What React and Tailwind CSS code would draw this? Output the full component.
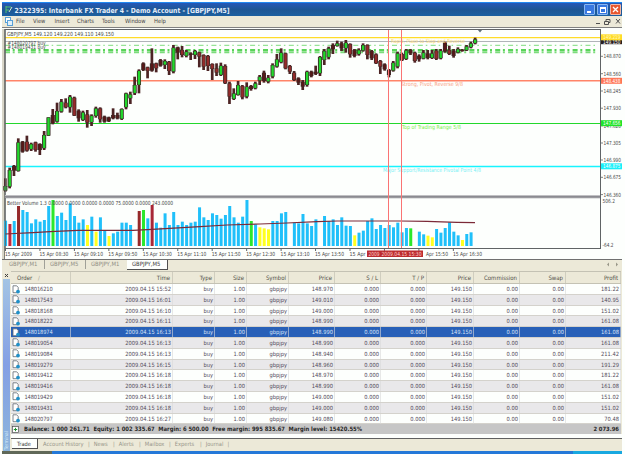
import React from 'react';

// [high, bodyTop, bodyBottom, low, colour] in thirds of a pixel, one entry per 5 minute bar
const CANDLES = [
	[535, 558, 572, 575, 'g'], [503, 510, 560, 565, 'g'], [495, 498, 512, 528, 'd'], [415, 427, 513, 515, 'g'],
	[423, 425, 455, 458, 'd'], [407, 425, 452, 455, 'r'], [428, 432, 448, 453, 'g'], [425, 427, 450, 455, 'r'],
	[430, 432, 450, 465, 'd'], [393, 405, 445, 450, 'g'], [352, 352, 407, 408, 'g'], [327, 345, 370, 373, 'd'],
	[308, 333, 365, 368, 'g'], [297, 305, 335, 338, 'g'], [295, 308, 322, 325, 'r'], [285, 290, 322, 338, 'g'],
	[290, 293, 347, 348, 'r'], [328, 332, 355, 365, 'd'], [332, 337, 360, 363, 'g'], [330, 343, 368, 383, 'r'],
	[343, 347, 367, 378, 'g'], [320, 325, 348, 353, 'g'], [322, 325, 358, 368, 'r'], [347, 350, 365, 368, 'd'],
	[350, 352, 364, 366, 'd'], [325, 345, 355, 358, 'd'], [338, 345, 355, 358, 'd'], [325, 327, 357, 360, 'g'],
	[278, 280, 322, 328, 'g'], [275, 283, 295, 312, 'g'], [230, 255, 280, 285, 'g'], [208, 212, 255, 280, 'g'],
	[187, 190, 210, 213, 'd'], [200, 202, 213, 235, 'r'], [145, 190, 212, 215, 'd'], [188, 190, 205, 217, 'r'],
	[177, 180, 197, 200, 'd'], [178, 183, 195, 207, 'g'], [183, 185, 213, 225, 'r'], [135, 143, 215, 220, 'g'],
	[140, 142, 158, 178, 'd'], [138, 150, 165, 172, 'r'], [150, 155, 168, 172, 'g'], [157, 160, 165, 180, 'd'],
	[150, 153, 165, 177, 'g'], [155, 157, 170, 202, 'r'], [163, 165, 200, 210, 'r'], [165, 168, 198, 213, 'r'],
	[190, 192, 207, 240, 'r'], [190, 205, 218, 228, 'r'], [188, 197, 225, 228, 'g'], [193, 198, 250, 252, 'r'],
	[245, 250, 290, 312, 'r'], [265, 280, 297, 300, 'g'], [243, 255, 285, 287, 'g'], [255, 258, 292, 298, 'r'],
	[247, 260, 290, 295, 'g'], [255, 258, 267, 272, 'd'], [245, 250, 265, 268, 'g'], [225, 230, 242, 255, 'g'],
	[212, 218, 243, 248, 'd'], [225, 233, 245, 250, 'g'], [190, 195, 230, 235, 'g'], [162, 178, 200, 203, 'g'],
	[145, 158, 187, 190, 'g'], [158, 160, 205, 208, 'r'], [195, 198, 215, 222, 'r'], [213, 218, 240, 243, 'r'],
	[232, 235, 248, 255, 'd'], [240, 245, 260, 270, 'd'], [212, 215, 255, 260, 'g'], [212, 215, 228, 232, 'd'],
	[197, 215, 222, 225, 'd'], [168, 171, 220, 228, 'g'], [147, 153, 180, 195, 'g'], [140, 145, 172, 178, 'g'],
	[130, 135, 148, 162, 'd'], [122, 130, 138, 140, 'g'], [125, 130, 145, 153, 'd'], [120, 128, 145, 158, 'g'],
	[130, 132, 163, 173, 'r'], [147, 150, 168, 172, 'd'], [145, 150, 163, 167, 'g'], [130, 135, 152, 155, 'g'],
	[133, 135, 165, 178, 'r'], [150, 153, 175, 180, 'd'], [160, 163, 190, 192, 'r'], [180, 183, 200, 222, 'r'],
	[190, 193, 208, 212, 'd'], [207, 210, 225, 232, 'd'], [183, 188, 212, 215, 'g'], [155, 160, 200, 205, 'g'],
	[158, 162, 181, 183, 'r'], [147, 151, 177, 180, 'g'], [147, 150, 160, 165, 'd'], [155, 158, 183, 188, 'r'],
	[163, 167, 178, 185, 'd'], [150, 158, 176, 178, 'g'], [150, 160, 174, 178, 'd'], [150, 160, 174, 177, 'g'],
	[147, 152, 177, 180, 'r'], [147, 152, 175, 178, 'g'], [125, 128, 155, 158, 'd'], [137, 150, 162, 165, 'r'],
	[147, 152, 168, 173, 'd'], [142, 147, 158, 160, 'g'], [147, 149, 153, 155, 'd'], [135, 139, 151, 153, 'g'],
	[125, 130, 142, 145, 'g'], [113, 118, 130, 133, 'g'],
];

const CANDLE_FILL = { g: '#22d82c', r: '#962a2a', d: '#581818' };

// top of each volume bar, in thirds of a pixel below y=190; 0 is a gap
const VOLUMES = [
	92, 102, 93, 48, 60, 66, 100, 88, 95, 90, 48, 30, 78, 68, 90, 40, 78, 98, 88, 105, 80, 125, 82, 122, 138, 130, 125, 98,
	98, 105, 0, 63, 60, 85, 45, 98, 113, 70, 105, 66, 105, 95, 105, 98, 95, 52, 82, 90, 70, 75, 86, 75, 48, 82, 98, 80, 30,
	93, 103, 112, 115, 118, 93, 93, 70, 66, 0, 98, 100, 72, 100, 108, 88, 0, 78, 93, 88, 105, 82, 107, 108, 136, 128, 122,
	93, 85, 117, 105, 114, 105, 112, 98, 127, 114, 115, 0, 125, 133, 137, 142, 117, 128, 114, 97, 125, 136, 150, 132, 127,
];

const VOLUME_COLORS = {
	1: '#c02840', 3: '#962a2a', 31: '#962a2a', 34: '#a82838',
	11: '#2ce82c', 32: '#2ce82c', 57: '#2ce82c', 94: '#2ce82c',
	19: '#ffff20', 21: '#ffff20', 24: '#ffff20', 59: '#ffff20', 60: '#ffff20', 61: '#ffff20',
	81: '#ffff20', 98: '#ffff20', 99: '#ffff20', 106: '#ffff20',
};

const PRICES = [
	['148.870', 56.3], ['148.560', 73.7], ['148.245', 91], ['147.930', 108.2], ['147.620', 125.8],
	['147.305', 143], ['146.990', 160], ['146.675', 177.3], ['146.360', 194.6],
];

// [text, x, width]
const TIMES = [
	['15 Apr 2009', 5, 27], ['15 Apr 08:30', 39.4, 29], ['15 Apr 09:10', 74, 29], ['15 Apr 09:50', 108.3, 29],
	['15 Apr 10:30', 142.8, 29], ['15 Apr 11:10', 177.3, 29], ['15 Apr 11:50', 211.7, 29], ['15 Apr 12:30', 246.2, 29],
	['15 Apr 13:10', 280.6, 29], ['15 Apr 13:50', 315, 29], ['15 Apr', 349.5, 16], ['Apr 15:50', 426, 22],
	['15 Apr 16:30', 453, 29],
];

const HEADERS = ['Time', 'Type', 'Size', 'Symbol', 'Price', 'S / L', 'T / P', 'Price', 'Commission', 'Swap', 'Profit'];

const ORDERS = [
	['148016210', '15:52', '148.970', '181.22'],
	['148017543', '16:01', '149.010', '140.95'],
	['148018168', '16:10', '149.000', '151.02'],
	['148018222', '16:11', '148.990', '161.08'],
	['148018974', '16:13', '148.990', '161.08'],
	['148019054', '16:13', '148.990', '161.08'],
	['148019084', '16:13', '148.940', '211.42'],
	['148019279', '16:15', '148.960', '191.29'],
	['148019412', '16:18', '148.970', '181.22'],
	['148019416', '16:18', '148.990', '161.08'],
	['148019429', '16:18', '149.000', '151.02'],
	['148019431', '16:18', '149.000', '151.02'],
	['148020797', '16:27', '149.080', '70.48'],
];

const GRID = 'grid grid-cols-[60px_102px_42px_32px_42px_46px_46px_46px_47px_46px_46px_55px]';

const barX = (i) => 5.2 + i * 4.31;

function Label({ x, y, w, fill = '#484848', children }) {
	return (
		<text x={x} y={y + 2.1} textLength={w} lengthAdjust="spacingAndGlyphs" fontSize="5.6" fill={fill}>
			{children}
		</text>
	);
}

function PriceTag({ y, h = 7, fill, color = '#fff', children }) {
	return (
		<g>
			<rect x="601" y={y - h / 2} width="21" height={h} fill={fill} />
			<Label x={603} y={y} w={17.5} fill={color}>{children}</Label>
		</g>
	);
}

function Chart() {
	return (
		<svg width="617" height="230" viewBox="5 29 617 230" className="block shrink-0 overflow-visible">
			<rect x="5" y="29" width="617" height="230" fill="#fdfffd" />

			{/* price levels */}
			<path d="M5 37.7H600" stroke="#ffdc28" strokeWidth="1.3" />
			<path d="M5 41.5H600" stroke="#b0b4b8" />
			<path d="M5 45.3H597" stroke="#6ed86e" strokeWidth="0.9" strokeDasharray="5 3 1.5 3.4" />
			<path d="M5 50H597" stroke="#58d458" strokeWidth="2.2" strokeDasharray="5 2.7 2 3.2" />
			<path d="M5 52.3H597" stroke="#7cdc7c" strokeWidth="2" strokeDasharray="5 2.7 2 3.2" />
			<path d="M5 80.8H600" stroke="#ff8468" strokeWidth="1.6" />
			<path d="M5 123.5H600" stroke="#22d82c" />
			<path d="M5 166.5H600" stroke="#18f4ff" strokeWidth="1.3" />

			{CANDLES.map(([high, top, bottom, low, c], i) => (
				<g key={i}>
					<rect x={barX(i) - 1.2} y={high / 3} width="2.7" height={(low - high) / 3} fill="#4c2424" />
					<rect x={barX(i) - 1.9} y={top / 3} width="4.1" height={(bottom - top) / 3} fill="#3c2c28" />
					<rect x={barX(i) - 1} y={top / 3 + 0.4} width="2.4" height={Math.max(1, (bottom - top) / 3 - 0.8)} fill={CANDLE_FILL[c]} />
				</g>
			))}

			<Label x={7} y={33.6} w={107}>GBPJPY,M5  149.120 149.220 149.110 149.150</Label>
			<Label x={7.5} y={42.4} w={38}>#148020797 buy</Label>
			<Label x={7.5} y={47} w={38}>#148019431 buy</Label>
			<Label x={391} y={41} w={74} fill="#fbd978">Rapid, Place to Stop and Reverse</Label>
			<Label x={401} y={84} w={62} fill="#f8a284">Strong, Pivot, Reverse  9/8</Label>
			<Label x={402} y={127} w={59} fill="#7cf04c">Top of Trading Range  5/8</Label>
			<Label x={383} y={170} w={98} fill="#7aeff4">Major Support/Resistance Pivotal Point  4/8</Label>
			<path d="M477.5 29.5h5l-2.5 3z" fill="#607078" />

			{/* volume panel */}
			<rect x="5" y="195.3" width="596" height="3" fill="#a6a6aa" />
			<path d="M5 196.8H601" stroke="#808086" />
			{VOLUMES.map((v, i) => v > 0 && (
				<rect key={i} x={barX(i) - 1.1} y={190 + v / 3} width="3" height={(168 - v) / 3} fill={VOLUME_COLORS[i] || '#20c0fa'} />
			))}
			<polyline
				points="5,234 33,232.7 50,231.7 78,230.3 133,230.3 152,229.3 200,226.7 227,225 260,224 287,223 317,221.7 337,221 400,221 427,221.3 457,222.3 475,222.6"
				fill="none"
				stroke="#7c2a38"
				strokeWidth="1.2"
			/>
			<Label x={7} y={202.5} w={166}>Better Volume 1.3  0.0000 0.0000 0.0000 0.0000 75.0000 0.0000 243.0000</Label>

			<path d="M388.5 30V249M401.5 30V249" stroke="#fa7474" />

			{/* axes */}
			<path d="M5 29.5H601M600.5 29V249M5 248.5H601M5.3 29V195M5.3 198V249" fill="none" stroke="#606466" />
			{PRICES.map(([price, y]) => (
				<g key={price}>
					<path d={`M601 ${y}h2`} stroke="#606466" strokeWidth="0.8" />
					<Label x={603.5} y={y} w={17.5}>{price}</Label>
				</g>
			))}
			<PriceTag y={42} h={4.4} fill="#282020">149.150</PriceTag>
			<PriceTag y={37.3} h={6} fill="#ffdc28" color="#fff8c0">149.219</PriceTag>
			<PriceTag y={80.8} h={6} fill="#ff7656">148.438</PriceTag>
			<PriceTag y={123.2} h={6} fill="#20e428">147.656</PriceTag>
			<PriceTag y={166.3} h={6} fill="#18f0fa">146.875</PriceTag>
			<Label x={602.5} y={201} w={12.5}>506.2</Label>
			<Label x={602.5} y={245.3} w={11}>-64.2</Label>

			{Array.from({ length: 14 }, (_, i) => (
				<path key={i} d={`M${5.5 + i * 34.45} 249v2`} stroke="#606466" />
			))}
			{TIMES.map(([t, x, w]) => (
				<Label key={t} x={x} y={253.8} w={w}>{t}</Label>
			))}
			<rect x="367" y="250.5" width="56" height="6.5" fill="#bc2c30" />
			<Label x={368.5} y={253.8} w={11} fill="#ffd0c8">2009</Label>
			<Label x={381.5} y={253.8} w={40} fill="#ffd0c8">2009.04.15 15:30</Label>
		</svg>
	);
}

function TitleBar() {
	return (
		<div className="flex h-[14px] shrink-0 items-center border-t border-[#2088f0] bg-linear-to-b from-[#2558b8] via-[#1d5694] to-[#1b60a0] pl-[3px] pr-px">
			<svg width="8" height="9" viewBox="0 0 8 9" className="mr-px">
				<path d="M1 1v7M1 2h5M1 5h3" stroke="#50c070" fill="none" />
				<path d="M4 7l3-5" stroke="#d8e8d0" fill="none" />
			</svg>
			<svg width="218" height="12" className="block overflow-visible">
				<text x="0.5" y="8.7" textLength="215" lengthAdjust="spacingAndGlyphs" fontSize="7" fontWeight="bold" fill="#e4eefa">
					2322395: Interbank FX Trader 4 - Demo Account - [GBPJPY,M5]
				</text>
			</svg>
			<div className="ml-auto flex gap-[2px]">
				<div className="flex h-[11px] w-[11px] items-end rounded-[1px] border border-[#88b8f0] bg-[#3878e0] pb-px pl-[2px]">
					<div className="h-[2px] w-[4px] bg-white" />
				</div>
				<div className="flex h-[11px] w-[11px] items-center justify-center rounded-[1px] border border-[#88b8f0] bg-[#3878e0]">
					<div className="h-[6px] w-[6px] border border-t-2 border-white" />
				</div>
				<div className="flex h-[11px] w-[11px] items-center justify-center rounded-[1px] border border-[#f0b8a8] bg-[#e85830]">
					<svg width="7" height="7"><path d="M1 1l5 5M6 1l-5 5" stroke="#fff" strokeWidth="1.3" /></svg>
				</div>
			</div>
		</div>
	);
}

function MenuBar() {
	return (
		<div className="flex h-[11px] shrink-0 items-center bg-[#ece9d8] pl-[3px] text-[5.8px] text-[#484848]">
			<svg width="8" height="9" viewBox="0 0 8 9" className="mr-[3px]">
				<rect x="0.5" y="0.5" width="5" height="5" fill="#fff" stroke="#58a0d8" />
				<rect x="2.5" y="3.5" width="5" height="5" fill="#e0f0fa" stroke="#58a0d8" />
			</svg>
			<span className="w-[17px]">File</span>
			<span className="w-[21.5px]">View</span>
			<span className="w-[22.5px]">Insert</span>
			<span className="w-[25px]">Charts</span>
			<span className="w-[23px]">Tools</span>
			<span className="w-[29px]">Window</span>
			<span>Help</span>
			<svg width="28" height="9" viewBox="0 0 28 9" className="ml-auto" fill="none" stroke="#505050">
				<path d="M2 6.5h4M10.5 4.5h4v3h-4zM12 4V2.5h4v3h-1M22 2l4 4.5M26 2l-4 4.5" />
			</svg>
		</div>
	);
}

function ChartTabs() {
	return (
		<div className="flex h-[12px] shrink-0 items-start border-t border-[#707070] bg-[#ece9d8] pl-[7px] text-[5.9px] leading-[9px] text-[#908e84]">
			<span className="w-[36px] border-r border-[#a0a098]">GBPJPY,M1</span>
			<span className="w-[41px] border-r border-[#a0a098] pl-[5px]">GBPJPY,M5</span>
			<span className="w-[41px] pl-[5px]">GBPJPY,M1</span>
			<span className="h-[10px] w-[41px] border-b border-r border-[#505050] bg-[#fdfffd] pl-[5px] text-[#404040]">GBPJPY,M5</span>
			<svg width="18" height="9" viewBox="0 0 18 9" className="ml-auto" fill="#989688">
				<path d="M5 2.5v4l-2-2zM12 2.5v4l2-2z" />
			</svg>
		</div>
	);
}

function OrderIcon() {
	return (
		<svg width="8" height="9" viewBox="0 0 8 9" className="ml-px mr-[4.5px] shrink-0">
			<path d="M1 0.8h3.7l1.5 1.6v5.3H1z" fill="#fff" stroke="#606870" strokeWidth="0.8" />
			<circle cx="6" cy="6.6" r="1.9" fill="#2090c8" />
		</svg>
	);
}

function OrderRow({ order, index }) {
	const [id, time, price, profit] = order;
	const selected = index === 4;
	const cells = [`2009.04.15 ${time}`, 'buy', '1.00', 'gbpjpy', price, '0.000', '0.000', '149.150', '0.00', '0.00', profit];
	const tone = selected
		? 'bg-[#2860b8] text-[#d8e4f8]'
		: index % 2 ? 'bg-[#e9e8ea] text-[#504858]' : 'bg-[#fdfffd] text-[#504858]';

	return (
		<div className={`${GRID} h-[10.8px] border-b border-[#d4d2cc] text-[5.7px] leading-[10px] ${tone}`}>
			<div className="flex items-center border-r border-[#d8d8d8]/60">
				<OrderIcon />
				<span className="tracking-[-0.14px]">{id}</span>
			</div>
			{cells.map((cell, i) => (
				<div key={i} className="border-r border-[#d8d8d8]/60 pr-px text-right">{cell}</div>
			))}
		</div>
	);
}

function Terminal() {
	return (
		<div className="flex h-[180px] shrink-0 bg-[#ece9d8]">
			<div className="flex w-[9px] shrink-0 flex-col items-center pt-[2px]">
				<svg width="5" height="5"><path d="M1 1l3 3M4 1L1 4" stroke="#404040" /></svg>
				<div className="mt-px flex w-[7px] flex-1 items-end justify-center bg-linear-to-b from-[#a4c4e4] via-[#84a0e4] to-[#8cb4dc] pb-px text-[5px] leading-[7px] text-[#d8ecfa]">
					<span className="rotate-180 [writing-mode:vertical-rl]">Terminal</span>
				</div>
			</div>

			<div className="flex w-[611px] flex-col">
				<div className={`${GRID} h-[13px] w-[610px] shrink-0 border-b border-t border-[#c4c2b4] bg-[#ece9d8] text-[6px] leading-[11px] text-[#505048]`}>
					<div className="border-r border-[#d0cebf] pl-[6px]">Order <span className="ml-[4px] text-[#a0a090]">/</span></div>
					{HEADERS.map((h, i) => (
						<div key={i} className="border-r border-[#d0cebf] pr-[2px] text-right">{h}</div>
					))}
				</div>

				<div className="w-[610px]">
					{ORDERS.map((order, i) => <OrderRow key={order[0]} order={order} index={i} />)}
				</div>

				<div className="flex h-[10px] w-[610px] shrink-0 items-center bg-[#c6c6c6] pl-px pr-[2px] text-[#282828]">
					<svg width="7" height="7" viewBox="0 0 7 7" className="mr-[5px]">
						<rect x="0.5" y="0.5" width="6" height="6" fill="#fff" stroke="#505050" strokeWidth="0.7" />
						<path d="M3.5 1.8v3.4M1.8 3.5h3.4" stroke="#209030" />
					</svg>
					<svg width="342" height="10" className="block overflow-visible">
						<text x="0" y="7.2" textLength="338" lengthAdjust="spacingAndGlyphs" fontSize="6" fontWeight="bold" fill="#282828" xmlSpace="preserve">
							Balance: 1 000 261.71  Equity: 1 002 335.67  Margin: 6 500.00  Free margin: 995 835.67  Margin level: 15420.55%
						</text>
					</svg>
					<span className="ml-auto text-[5.8px] font-bold">2 073.96</span>
				</div>

				<div className="h-[4px] shrink-0 bg-[#fdfffd]" />
				<div className="flex flex-1 items-start whitespace-nowrap border-t border-[#606060] text-[5.7px] leading-[10px] text-[#98968a]">
					<span className="ml-px h-[10px] w-[26px] border-b border-r border-[#505050] bg-[#fdfffd] pl-[5px] text-[#404040]">Trade</span>
					<span className="w-[50px] pl-[5px]">Account History</span>
					<span className="w-[25px] before:mr-[4px] before:content-['|']">News</span>
					<span className="w-[26px] before:mr-[4px] before:content-['|']">Alerts</span>
					<span className="w-[30px] before:mr-[4px] before:content-['|']">Mailbox</span>
					<span className="w-[31px] before:mr-[4px] before:content-['|']">Experts</span>
					<span className="before:mr-[4px] before:content-['|'] after:ml-[4px] after:content-['|']">Journal</span>
				</div>
			</div>
		</div>
	);
}

export default function App() {
	return (
		<div className="h-[454px] w-[625px] overflow-hidden bg-[#fdfffd] pl-[2px] pt-[2px] font-['DejaVu_Sans_Condensed','DejaVu_Sans',sans-serif] [font-stretch:condensed]">
			<div className="flex h-[452px] w-[620px] flex-col bg-[#ece9d8]">
				<TitleBar />
				<MenuBar />
				<div className="h-[2px] shrink-0 border-t border-[#808080] bg-[#fdfffd]" />
				<div className="flex h-[230px] shrink-0 bg-[#fdfffd]">
					<div className="w-[3px] shrink-0 border-r border-[#808078] bg-[#d8d6c8]" />
					<Chart />
				</div>
				<ChartTabs />
				<Terminal />
				<div className="flex flex-1 bg-[#2478d8]">
					<div className="w-[50px] bg-[#606858]" />
					<div className="ml-auto w-[49px] bg-[#18a8e0]" />
				</div>
			</div>
		</div>
	);
}
